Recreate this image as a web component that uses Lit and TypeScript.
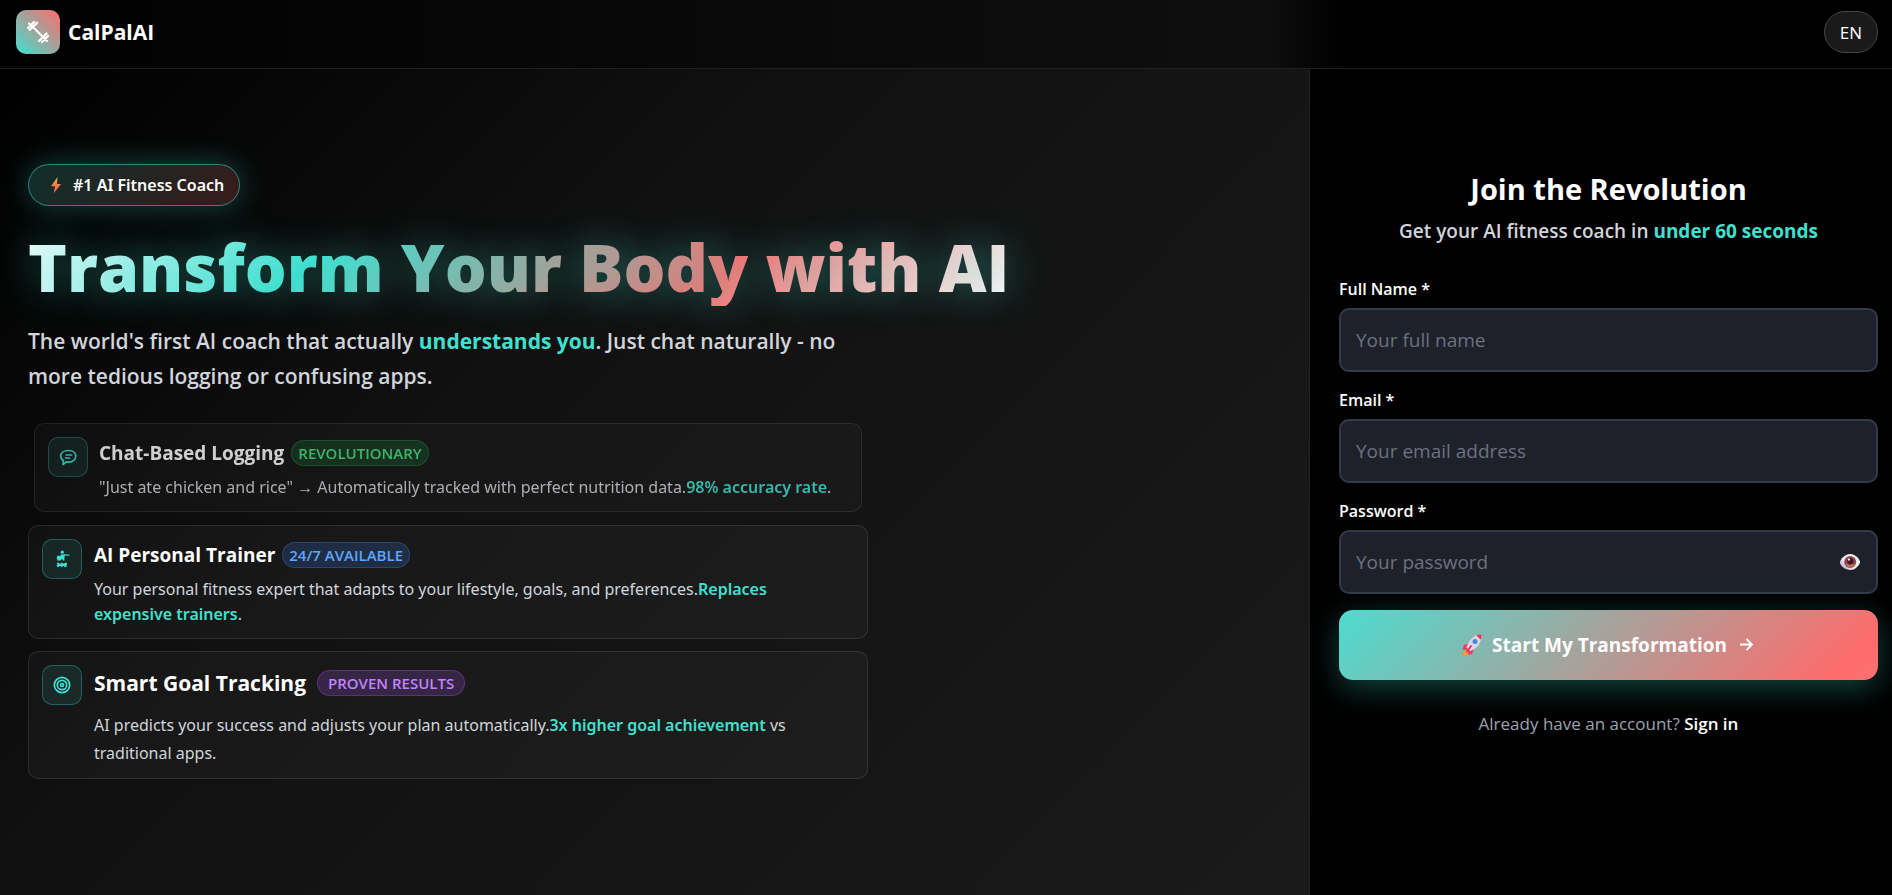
import { LitElement, html, css, svg, nothing } from "lit";
import { customElement, property } from "lit/decorators.js";

interface Feature {
  icon: "chat" | "trainer" | "target";
  title: string;
  badge: string;
  tone: string;
  text: string;
  strong: string;
  rest: string;
  variant: string;
}

const features: Feature[] = [
  {
    icon: "chat",
    title: "Chat-Based Logging",
    badge: "REVOLUTIONARY",
    tone: "green",
    text: '"Just ate chicken and rice" → Automatically tracked with perfect nutrition data.',
    strong: "98% accuracy rate",
    rest: ".",
    variant: "entering",
  },
  {
    icon: "trainer",
    title: "AI Personal Trainer",
    badge: "24/7 AVAILABLE",
    tone: "blue",
    text: "Your personal fitness expert that adapts to your lifestyle, goals, and preferences.",
    strong: "Replaces expensive trainers",
    rest: ".",
    variant: "",
  },
  {
    icon: "target",
    title: "Smart Goal Tracking",
    badge: "PROVEN RESULTS",
    tone: "purple",
    text: "AI predicts your success and adjusts your plan automatically.",
    strong: "3x higher goal achievement",
    rest: " vs traditional apps.",
    variant: "large",
  },
];

const icons = {
  chat: svg`
    <g fill="none" stroke="currentColor" stroke-width="1.6" stroke-linecap="round" stroke-linejoin="round">
      <path d="M10.500 3.500c4.400 0 7.300 2.300 7.300 5.600s-2.900 6-7.300 6c-.8 0-1.500-.1-2.200-.2L5 17.600l.5-3.900C3.700 12.600 2.700 11 2.700 9.100c0-3.300 3-5.600 7.800-5.600z"/>
      <path d="M8 8h5.500M7.500 11h4"/>
    </g>`,
  trainer: svg`
    <g fill="currentColor">
      <circle cx="10.300" cy="3.200" r="1.600"/>
      <path d="M5.200 7.300l1.600-.9 1.400.9.800-1.700h2.600l1.400-.4 4.500.6v1l-4-.2-1.100.8v4.100h-1.500l-.8-1.700-1.500 1.700H5.200V9.800L4.500 9z"/>
      <path d="M4.800 14l1.400-.6 1.400 1.400 1.400-.4.9-1.200 1 1.400 1.300-.2 1.400-1 1.400.6v1.400l-.7.9.7 1.400-2.100.5-1.200-1.400-1 .2-.8 1.500-1.300-1.600H7.600l-.8 1.200-2-.6v-1.200l.7-.6z"/>
    </g>`,
  target: svg`
    <g fill="none" stroke="currentColor" stroke-width="1.700">
      <circle cx="10" cy="10" r="7.700"/>
      <circle cx="10" cy="10" r="4.700"/>
      <circle cx="10" cy="10" r="1.500"/>
    </g>`,
};

const base = css`
  *, *::before, *::after { box-sizing: border-box; }
  h1, h2, h3, p { margin: 0; }
  button, input { font: inherit; }
  svg { display: block; }
`;

@customElement("feature-card")
export class FeatureCard extends LitElement {
  @property({ attribute: false }) feature!: Feature;

  static styles = [
    base,
    css`
      :host { display: block; }
      .card {
        display: flex;
        gap: 12px;
        padding: 13px 20px 11px 13px;
        border: 1px solid rgba(255, 255, 255, 0.1);
        border-radius: 10px;
        background: rgba(255, 255, 255, 0.03);
      }
      .entering { opacity: 0.8; margin: 1px 6px; gap: 11px; }
      .icon {
        flex: none;
        display: grid;
        place-items: center;
        width: 40px;
        height: 40px;
        border: 1px solid rgba(64, 224, 208, 0.3);
        border-radius: 10px;
        background: rgba(64, 224, 208, 0.1);
        color: #40e0d0;
      }
      .icon svg { width: 20px; height: 20px; }
      .body { flex: 1; min-width: 0; }
      .head { display: flex; align-items: center; gap: 7px; margin-bottom: 6px; }
      h3 { font-size: 19px; line-height: 32px; font-weight: 700; color: #fff; }
      .badge {
        padding: 0 6px;
        border: 1px solid;
        border-radius: 13px;
        font-size: 15px;
        line-height: 24px;
        font-weight: 600;
      }
      .green { color: #4ade80; background: rgba(34, 197, 94, 0.2); border-color: rgba(34, 197, 94, 0.3); }
      .blue { color: #60a5fa; background: rgba(59, 130, 246, 0.2); border-color: rgba(59, 130, 246, 0.3); }
      .purple { color: #c084fc; background: rgba(168, 85, 247, 0.2); border-color: rgba(168, 85, 247, 0.3); }
      p { font-family: "Noto Sans", sans-serif; font-size: 16px; line-height: 25px; color: #d1d5db; }
      strong { font-weight: 600; color: #40e0d0; }
      .large .head { gap: 11px; margin-bottom: 10px; }
      .large h3 { font-size: 21px; line-height: 36px; }
      .large .badge { padding: 0 10px; }
      .large p { line-height: 28px; }
    `,
  ];

  render() {
    const f = this.feature;
    return html`
      <article class="card ${f.variant}">
        <span class="icon"><svg viewBox="0 0 20 20" aria-hidden="true">${icons[f.icon]}</svg></span>
        <div class="body">
          <div class="head"><h3>${f.title}</h3><span class="badge ${f.tone}">${f.badge}</span></div>
          <p>${f.text}<strong>${f.strong}</strong>${f.rest}</p>
        </div>
      </article>`;
  }
}

@customElement("form-field")
export class FormField extends LitElement {
  @property() label = "";
  @property() placeholder = "";
  @property() type = "text";

  static styles = [
    base,
    css`
      :host { display: block; }
      label { display: block; margin-bottom: 7px; font-size: 16px; line-height: 24px; font-weight: 600; color: #fff; }
      .box {
        display: flex;
        align-items: center;
        height: 64px;
        padding-right: 16px;
        border: 2px solid #333a47;
        border-radius: 10px;
        background: #1e2129;
      }
      input {
        flex: 1;
        min-width: 0;
        height: 100%;
        padding: 0 15px;
        border: 0;
        outline: 0;
        background: none;
        color: #fff;
        font-size: 19px;
      }
      input::placeholder { color: #6b7280; opacity: 1; }
      button { flex: none; padding: 0; border: 0; background: none; cursor: pointer; }
      button svg { width: 20px; height: 16px; }
    `,
  ];

  render() {
    return html`
      <label for="field">${this.label}</label>
      <div class="box">
        <input id="field" type=${this.type} placeholder=${this.placeholder} />
        ${this.type === "password"
          ? html`<button type="button" aria-label="Show password">
              <svg viewBox="0 0 20 16" aria-hidden="true">
                <defs>
                  <linearGradient id="white" x1="0" y1="1" x2="1" y2="0">
                    <stop offset="0" stop-color="#a88fca"/><stop offset=".4" stop-color="#ece8ee"/><stop offset="1" stop-color="#f6f6f6"/>
                  </linearGradient>
                </defs>
                <path d="M0 8.500C0 5.500 4.500 0 10.200 0S20 5.800 20 7.900 16 16 10.500 16 0 11.500 0 8.500z" fill="url(#white)"/>
                <circle cx="10.200" cy="7.900" r="6" fill="#8f4a48"/>
                <path d="M5 10.800a6 6 0 0 0 10.400 0l-2.500-1.500-5.400.4z" fill="#b8695a"/>
                <circle cx="10.400" cy="7.200" r="3.200" fill="#421727"/>
                <circle cx="8.900" cy="5.600" r="1.100" fill="#fff"/>
              </svg>
            </button>`
          : nothing}
      </div>`;
  }
}

@customElement("app-root")
export class AppRoot extends LitElement {
  static styles = [
    base,
    css`
      :host {
        display: flex;
        flex-direction: column;
        min-height: 100vh;
        background: #000;
        color: #fff;
        font-family: "Open Sans", "Noto Sans", sans-serif;
      }
      .page { flex: 1; display: grid; grid-template-rows: auto 1fr; grid-template-columns: minmax(0, 1309fr) minmax(0, 583fr); }
      header {
        grid-column: 1 / -1;
        display: flex;
        align-items: center;
        justify-content: space-between;
        height: 69px;
        padding: 0 14px 4px 16px;
        border-bottom: 1px solid #202020;
        background: linear-gradient(90deg, #010101 0%, #0b0b0b 48%, #0e0e0e 67%, #000 71%);
      }
      .brand { display: flex; align-items: center; gap: 8px; font-size: 21px; line-height: 32px; font-weight: 700; }
      .logo {
        display: grid;
        place-items: center;
        width: 44px;
        height: 44px;
        border-radius: 10px;
        background: linear-gradient(45deg, #40e0d0, #ff6b6b);
      }
      .logo svg { width: 26px; height: 26px; }
      .lang {
        height: 42px;
        padding: 0 15px;
        border: 1px solid #444;
        border-radius: 21px;
        background: #1a1a1a;
        color: #fff;
        font-size: 17px;
      }
      .hero {
        display: flex;
        flex-direction: column;
        justify-content: center;
        align-items: flex-start;
        padding: 32px 28px 54px;
        background: linear-gradient(135deg, #000 0%, #111 38%, #1a1a1a 100%);
      }
      .pill {
        display: flex;
        align-items: center;
        gap: 10px;
        height: 42px;
        padding: 0 15px 0 20px;
        border: 1px solid rgba(64, 224, 208, 0.5);
        border-radius: 21px;
        background: linear-gradient(135deg, rgba(64, 224, 208, 0.2), rgba(255, 107, 107, 0.2));
        box-shadow: 0 0 30px rgba(64, 224, 208, 0.3);
        font-family: "Noto Sans", sans-serif;
        font-size: 16px;
        line-height: 24px;
        font-weight: 600;
      }
      .pill svg { width: 14px; height: 18px; }
      h1 {
        margin: 20px 0 18px;
        font-size: 66px;
        line-height: 80px;
        font-weight: 800;
        background: linear-gradient(135deg, #fff 0%, #40e0d0 30%, #ff6b6b 70%, #fff 100%);
        background-clip: text;
        -webkit-background-clip: text;
        color: transparent;
        text-shadow: 0 0 40px rgba(64, 224, 208, 0.45);
      }
      .lead { max-width: 840px; margin-bottom: 28px; font-size: 21px; line-height: 35px; font-weight: 600; color: #d1d5db; }
      .lead strong, .sub strong { font-weight: 700; color: #40e0d0; }
      .features { display: flex; flex-direction: column; gap: 12px; width: 100%; max-width: 840px; }
      .signup {
        display: flex;
        flex-direction: column;
        justify-content: center;
        padding: 32px 14px 89px 29px;
        border-left: 1px solid #202020;
        background: #000;
      }
      .intro { margin-bottom: 30px; text-align: center; }
      h2 { font-size: 29px; line-height: 44px; font-weight: 700; }
      .sub { margin-top: 4px; font-size: 19px; line-height: 32px; font-weight: 600; color: #d1d5db; }
      form { display: flex; flex-direction: column; gap: 16px; }
      .submit {
        display: flex;
        align-items: center;
        justify-content: center;
        gap: 10px;
        height: 70px;
        border: 0;
        border-radius: 14px;
        background: linear-gradient(135deg, #4cdccf 0%, #ff6b6b 93%, #f97373 100%);
        box-shadow: 0 8px 30px rgba(64, 224, 208, 0.3);
        color: #fff;
        font-size: 19px;
        font-weight: 700;
        cursor: pointer;
      }
      .rocket { width: 20px; height: 22px; }
      .arrow { width: 18px; height: 18px; }
      .signin { margin-top: 28px; text-align: center; font-size: 17px; line-height: 32px; color: #9ca3af; }
      .signin a { color: #fff; font-weight: 600; text-decoration: none; }
    `,
  ];

  render() {
    return html`
      <div class="page">
        <header>
          <div class="brand">
            <span class="logo">
              <svg viewBox="0 0 26 26" fill="none" stroke="#fff" stroke-width="2.300" stroke-linecap="round" aria-hidden="true">
                <path d="M7 7l12 12" stroke-width="2"/>
                <path d="M3 9L9 3M4.500 11L12 3.800M4 4.500l4 4M14 22l7.500-7.500M17 23l6-6M18 18l4 4"/>
              </svg>
            </span>
            <span>CalPalAI</span>
          </div>
          <button class="lang" type="button">EN</button>
        </header>
        <section class="hero">
          <div class="pill">
            <svg viewBox="0 0 14 18" aria-hidden="true">
              <defs><linearGradient id="bolt" x1="0" y1="0" x2="0" y2="1"><stop offset="0" stop-color="#fbb03b"/><stop offset="1" stop-color="#f8485e"/></linearGradient></defs>
              <path d="M8.500 1L2 10.200h4L4.700 17.500 12 8H8z" fill="url(#bolt)"/>
            </svg>
            <span>#1 AI Fitness Coach</span>
          </div>
          <h1>Transform Your Body with AI</h1>
          <p class="lead">The world's first AI coach that actually <strong>understands you</strong>. Just chat naturally - no more tedious logging or confusing apps.</p>
          <div class="features">${features.map((f) => html`<feature-card .feature=${f}></feature-card>`)}</div>
        </section>
        <section class="signup">
          <div class="intro">
            <h2>Join the Revolution</h2>
            <p class="sub">Get your AI fitness coach in <strong>under 60 seconds</strong></p>
          </div>
          <form>
            <form-field label="Full Name *" placeholder="Your full name"></form-field>
            <form-field label="Email *" type="email" placeholder="Your email address"></form-field>
            <form-field label="Password *" type="password" placeholder="Your password"></form-field>
            <button class="submit" type="button">
              <svg class="rocket" viewBox="0 0 20 22" aria-hidden="true">
                <path d="M4.500 15L1 18.500 0 22l4.500-1 3-3z" fill="#ff9a2e"/>
                <path d="M6.500 9.500L2 11 .5 15.500l5 .5zM12 14l-1.500 5.500L6.500 21l-.5-5z" fill="#f0386b"/>
                <path d="M19.500.500C13 .5 7 5 4.500 13.500l3.500 3.500C15.500 14.500 20 8 19.500.500z" fill="#dcd6e6"/>
                <path d="M19.500.500c-2 0-3.500.3-5 1l4.200 4.200c.7-1.700.9-3.500.8-5.200z" fill="#e8304f"/>
                <circle cx="13" cy="7.500" r="2.500" fill="#3f8ae0"/>
                <path d="M9 12l-4 5.500" stroke="#e0315f" stroke-width="1.800" stroke-linecap="round"/>
              </svg>
              <span>Start My Transformation</span>
              <svg class="arrow" viewBox="0 0 18 18" fill="none" stroke="#fff" stroke-width="1.800" aria-hidden="true"><path d="M3 8.500h12M9.500 3l5.500 5.500-5.500 5.500"/></svg>
            </button>
          </form>
          <p class="signin">Already have an account? <a href="#signin">Sign in</a></p>
        </section>
      </div>`;
  }
}
